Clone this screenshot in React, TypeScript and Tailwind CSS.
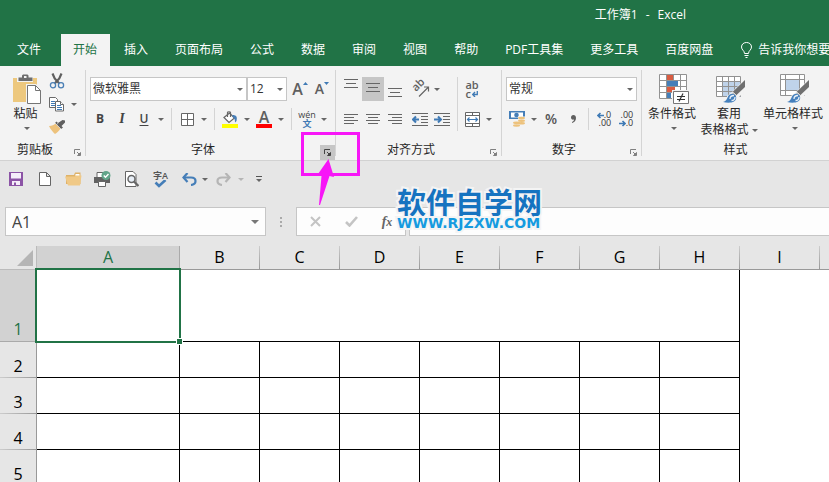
import React from "react";

type IconProps = { className?: string };

const Caret = ({ className = "fill-[#666]" }: IconProps) => (
  <svg width="6" height="3" viewBox="0 0 6 3" className={`shrink-0 ${className}`}>
    <path d="M0 0h6L3 3z" />
  </svg>
);

const CaretButton = ({ label }: { label: string }) => (
  <button aria-label={label} className="flex w-3 items-center justify-center">
    <Caret />
  </button>
);

const Tool = ({
  label,
  active,
  height = "h-6",
  children,
}: {
  label: string;
  active?: boolean;
  height?: string;
  children: React.ReactNode;
}) => (
  <button
    aria-label={label}
    title={label}
    className={`flex w-[22px] shrink-0 items-center justify-center ${height} ${
      active ? "bg-[#c6c6c6]" : ""
    }`}
  >
    {children}
  </button>
);

const Divider = () => <div className="mx-1 h-[22px] w-px shrink-0 bg-[#d4d4d4]" />;

const Group = ({
  name,
  className,
  launcher = true,
  launcherActive,
  children,
}: {
  name: string;
  className: string;
  launcher?: boolean;
  launcherActive?: boolean;
  children: React.ReactNode;
}) => (
  <>
    <section aria-label={name} className={`flex h-[90px] shrink-0 flex-col ${className}`}>
      {children}
      <div className="mt-auto flex items-end">
        <span className="flex-1 text-center leading-5 text-[#262626]">{name}</span>
        {launcher && (
          <button
            aria-label={`${name}设置`}
            className={`flex h-[15px] w-[15px] items-center justify-center ${
              launcherActive ? "bg-[#c6c6c6]" : ""
            }`}
          >
            <svg width="7" height="7" viewBox="0 0 7 7" fill="none" stroke={launcherActive ? "#444" : "#808080"}>
              <path d="M.5 5V.5H6M3 3l2.500 2.500" />
              <path d="M3.500 6.500h3v-3z" fill={launcherActive ? "#444" : "#808080"} />
            </svg>
          </button>
        )}
      </div>
    </section>
    {launcher && <div className="h-[86px] w-px shrink-0 bg-[#d4d4d4]" />}
  </>
);

const Combo = ({ label, value, className }: { label: string; value: string; className: string }) => (
  <div className={`relative ${className}`}>
    <select
      aria-label={label}
      className="h-6 w-full appearance-none border border-[#c6c6c6] bg-white pl-[2px] text-xs text-[#333]"
    >
      <option>{value}</option>
    </select>
    <Caret className="pointer-events-none absolute right-1 top-[11px] fill-[#666]" />
  </div>
);

/* three or four horizontal strokes, given as [x, width] per line */
const Lines = ({ rows, top }: { rows: number[][]; top: number }) => (
  <svg width="14" height="20" viewBox="0 0 14 20" fill="#666" shapeRendering="crispEdges">
    {rows.map(([x, w], i) => (
      <rect key={i} x={x} y={top + i * (rows.length === 4 ? 3 : 4)} width={w} height="1" />
    ))}
  </svg>
);

const PasteIcon = () => (
  <svg width="28" height="30" viewBox="0 0 28 30">
    <path d="M0 4h24v24H0z" fill="#edc87e" />
    <path d="M4 2.500h16V8H4z" fill="#f3f3f3" />
    <path d="M5.500 3.500h3.500V1.500L10 .5h4.500L15.500 1.500v2h4V7h-14z" fill="#6d6d6d" />
    <path d="M11 2h2.500v2H11z" fill="#f3f3f3" />
    <path d="M13 10h10l5 5v15H13z" fill="#f3f3f3" />
    <path d="M14.500 11.500h8l5 5v13h-13z" fill="#fff" stroke="#757575" />
    <path d="M22.500 11.500v5h5" fill="none" stroke="#757575" />
  </svg>
);

const CutIcon = () => (
  <svg width="16" height="16" viewBox="0 0 16 16" fill="none">
    <path d="M3.500.5l2.200 5 4.600 5M12.500.5l-2.200 5-4.600 5" stroke="#5f5f5f" strokeWidth="2.200" />
    <circle cx="4" cy="12.200" r="2.600" stroke="#4a7fb5" strokeWidth="1.300" />
    <circle cx="12" cy="12.200" r="2.600" stroke="#4a7fb5" strokeWidth="1.300" />
  </svg>
);

const CopyIcon = () => (
  <svg width="16" height="15" viewBox="0 0 16 15" fill="#fff" stroke="#6a6a6a">
    <path d="M.5.5h6l2 2v8h-8z" />
    <path d="M2 4.500h4M2 6.500h4M2 8.500h4" stroke="#3f7ab5" />
    <path d="M6.500 4.500h5l3 3v6.500h-8z" />
    <path d="M11.500 4.500v3h3" />
    <path d="M8 8.500h4M8 10.500h5M8 12.500h5" stroke="#3f7ab5" />
  </svg>
);

const BrushIcon = () => (
  <svg width="16" height="14" viewBox="0 0 16 14">
    <path d="M0 6c3 0 5-1 6.500-2.500l5 5C10 11 8 13 6 14 4 12 1.500 9.500 0 6z" fill="#edc27c" />
    <path d="M6 3l1.500-1.500L9 3l4.500-3L16 .5v2L12.500 6 14 7.500 12 9z" fill="#5f5f5f" />
    <path d="M9 3l-1 1.500M6 3l6 6" stroke="#f3f3f3" strokeWidth=".6" />
  </svg>
);

const PaintBrush = () => (
  <g>
    <path d="M29 6v7L20 21.500 16.500 18z" fill="#6f6f6f" />
    <path d="M17.500 18.500l3 3-1.500 1.500-3.500-3.500z" fill="#b9b9b9" stroke="#f3f3f3" strokeWidth=".7" />
    <path d="M7 28c3-.5 4-3 5-5.500 1.500-3 5-3.500 7-1.500s1.500 5-1 6.500C15.500 29 11 29 7 28z" fill="#4580bd" />
    <path d="M14 25c0-2 1.500-3.500 4-3.500M15.500 26.500c2 0 3.500-1.500 3.500-3.500" fill="none" stroke="#e7f0f8" strokeWidth="1.300" />
  </g>
);

const ConditionalIcon = () => (
  <svg width="30" height="30" viewBox="0 0 30 30">
    <path d="M.5.5h27v24H.5z" fill="#fff" />
    <path d="M.5.5h27v24H.5zM.5 6.500h27M.5 12.500h27M.5 18.500h27M7.500.5v24M14.500.5v24M21.500.5v24" fill="none" stroke="#929292" />
    <path d="M8 1h6v5H8zM8 13h8v5H8z" fill="#d95c41" />
    <path d="M8 7h11v5H8zM8 19h4v5H8z" fill="#457eb8" />
    <path d="M13 16h17v14H13z" fill="#f3f3f3" />
    <path d="M14.500 17.500h15v12h-15z" fill="#fff" stroke="#777" />
    <path d="M18 22.500h8M18 25.500h8M24 19.500l-4 8" stroke="#333" strokeWidth="1.200" />
  </svg>
);

const TableFormatIcon = () => (
  <svg width="30" height="30" viewBox="0 0 30 30">
    <path d="M.5 2.500h24v20H.5z" fill="#fff" />
    <path d="M7 8h18v15H7z" fill="#bfd3ea" />
    <path d="M.5 2.500h24v20H.5zM.5 7.500h24M.5 12.500h24M.5 17.500h24M6.500 2.500v20M12.500 2.500v20M18.500 2.500v20" fill="none" stroke="#929292" />
    <path d="M26 8L16 18 11 22v6l8-1 6-6h3z" fill="#f3f3f3" />
    <PaintBrush />
  </svg>
);

const CellStyleIcon = () => (
  <svg width="30" height="30" viewBox="0 0 30 30">
    <path d="M.5.5h24v21H.5z" fill="#fff" />
    <path d="M.5.5h24v21H.5zM.5 5.500h24M.5 16.500h24M5.500.5v21M19.500.5v21" fill="none" stroke="#929292" />
    <path d="M6 6h13v10H6z" fill="#bfd3ea" />
    <path d="M26 8L16 18 11 22v6l8-1 6-6h3z" fill="#f3f3f3" />
    <PaintBrush />
  </svg>
);

const BucketIcon = () => (
  <svg width="16" height="17" viewBox="0 0 16 17">
    <path d="M2 6.500L7.500 2l5 5-5.500 4.500z" fill="#fff" stroke="#666" strokeWidth="1.200" />
    <path d="M5.500 6V1.500C5.500.5 8.500.5 8.500 1.500V6" fill="none" stroke="#666" strokeWidth="1.200" />
    <path d="M10.500 4c4 0 5 2 4 6l-1.500 1.500c0-3-.5-4.500-2.500-5.500z" fill="#457eb8" />
    <path d="M0 13h16v4H0z" fill="#ff0" />
  </svg>
);

const IndentIcon = ({ right }: { right?: boolean }) => (
  <svg width="16" height="13" viewBox="0 0 16 13">
    <path d="M0 .5h16M9 3.500h7M9 6.500h7M9 9.500h7M0 12.500h16" stroke="#666" />
    <path d={right ? "M0 6.500h6M4 3.500l3 3-3 3" : "M7 6.500H1M4 3.500l-3 3 3 3"} stroke="#3f7ab5" strokeWidth="2" fill="none" />
  </svg>
);

const OrientationIcon = () => (
  <svg width="18" height="18" viewBox="0 0 18 18" className="overflow-visible">
    <text x="0" y="0" transform="translate(5 12) rotate(-45)" fontSize="11" fontWeight="600" fill="#5f5f5f">
      ab
    </text>
    <path d="M8 16.500L17 7.500M13 7h4.500v4.500" fill="none" stroke="#666" strokeWidth="1.200" />
  </svg>
);

const MergeIcon = () => (
  <svg width="15" height="15" viewBox="0 0 15 15">
    <path d="M.5.5h14v14H.5z" fill="#fff" stroke="#666" />
    <path d="M.5 3.500h14M.5 11.500h14M7.500.5v3M7.500 11.500v3" stroke="#666" />
    <path d="M2.500 7.500h10M4.500 5.500l-2 2 2 2M10.500 5.500l2 2-2 2" fill="none" stroke="#3f7ab5" strokeWidth="1.200" />
  </svg>
);

const CurrencyIcon = () => (
  <svg width="17" height="16" viewBox="0 0 17 16">
    <path d="M0 0h16v8H0z" fill="#457eb8" />
    <path d="M2 1.500h12v5H2z" fill="#fff" />
    <circle cx="7.500" cy="4" r="2.300" fill="#457eb8" />
    <path d="M9 5.500h8V15H4v-4.500h5z" fill="#f3f3f3" />
    <g fill="#edc27c">
      <ellipse cx="12.500" cy="7" rx="3.500" ry="1.200" />
      <ellipse cx="12.500" cy="9.700" rx="3.500" ry="1.200" />
      <ellipse cx="12.500" cy="12.300" rx="3.500" ry="1.200" />
      <ellipse cx="7.500" cy="11.800" rx="3.500" ry="1.200" />
      <ellipse cx="7.500" cy="14.500" rx="3.500" ry="1.200" />
    </g>
  </svg>
);

const SmallArrow = ({ right }: { right?: boolean }) => (
  <svg width="7" height="7" viewBox="0 0 7 7" fill="none" stroke="#3f7ab5" strokeWidth="1.600" className="shrink-0">
    <path d={right ? "M0 3.500h6M3.500 1L6 3.500 3.500 6" : "M7 3.500H1M3.500 1L1 3.500 3.500 6"} />
  </svg>
);

const quickTools = [
  {
    label: "保存",
    icon: (
      <svg width="14" height="14" viewBox="0 0 14 14">
        <path d="M0 0h14v14H0z" fill="#8c54a6" />
        <path d="M2 1h10v5.500H2zM3 9h8v4H3z" fill="#f6eefa" />
        <path d="M5 10.500h2V13H5z" fill="#8c54a6" />
      </svg>
    ),
  },
  {
    label: "新建",
    icon: (
      <svg width="12" height="14" viewBox="0 0 12 14" fill="#fff" stroke="#666">
        <path d="M.5.5h7l4 4v9H.5zM7.500.5v4h4" />
      </svg>
    ),
  },
  {
    label: "打开",
    icon: (
      <svg width="17" height="14" viewBox="0 0 17 14">
        <path d="M1 3h8l1-2.500h5.500V12H1z" fill="#dfb268" />
        <path d="M10.500 2h4v2h-4z" fill="#fff" />
        <path d="M0 4.500h10l1-1h5.500L15 13.500H3z" fill="#f0c987" />
      </svg>
    ),
  },
  {
    label: "快速打印",
    icon: (
      <svg width="17" height="16" viewBox="0 0 17 16">
        <path d="M3 1.500h7v5H3z" fill="#fff" stroke="#666" />
        <path d="M0 6h16v6H0z" fill="#626262" />
        <path d="M4.500 10.500h7v5h-7z" fill="#fff" stroke="#666" />
        <circle cx="12" cy="4.500" r="4.500" fill="#62a58a" />
        <path d="M9.800 4.500l1.700 1.800L14.500 3" fill="none" stroke="#fff" strokeWidth="1.400" />
      </svg>
    ),
  },
  {
    label: "打印预览",
    icon: (
      <svg width="14" height="16" viewBox="0 0 14 16">
        <path d="M.5.5h7.500l3 3v12H.5z" fill="#fff" stroke="#666" />
        <circle cx="6.500" cy="8" r="3.500" fill="#e7eef6" stroke="#666" strokeWidth="1.500" />
        <path d="M9 10.500l4.500 4.500" stroke="#666" strokeWidth="2.200" />
      </svg>
    ),
  },
  {
    label: "拼写检查",
    icon: (
      <span className="flex flex-col items-center">
        <span className="text-[9px] font-semibold leading-[9px] text-[#555]">字A</span>
        <svg width="13" height="8" viewBox="0 0 13 8" fill="none" stroke="#457eb8" strokeWidth="2.600">
          <path d="M1.500 2.500l3.500 3.500L11.500 0" />
        </svg>
      </span>
    ),
  },
];

const UndoIcon = ({ color, flip }: { color: string; flip?: boolean }) => (
  <svg width="15" height="13" viewBox="0 0 15 13" className={flip ? "-scale-x-100" : ""}>
    <path d="M1.500 4.500h7.500c6 0 6 7 0 7.500" fill="none" stroke={color} strokeWidth="2.200" />
    <path d="M5.500 0L1.500 4.500l4 4.500" fill="none" stroke={color} strokeWidth="2.200" />
  </svg>
);

const ribbonTabs = ["插入", "页面布局", "公式", "数据", "审阅", "视图", "帮助", "PDF工具集", "更多工具", "百度网盘"];
const columns = ["B", "C", "D", "E", "F", "G", "H", "I"];
const rows = [2, 3, 4, 5];

const Header = () => (
  <header className="bg-[#217346] text-white">
    <div className="flex h-[34px] items-center justify-end gap-2 pb-1 pr-[143px]">
      <span>工作簿1</span>
      <span>-</span>
      <span>Excel</span>
    </div>
    <nav className="flex h-8 items-stretch gap-px pl-1">
      <button className="mr-[6px] shrink-0 px-[13px]">文件</button>
      <button className="shrink-0 bg-[#f3f3f3] pl-3 pr-[13px] text-[#217346]">开始</button>
      {ribbonTabs.map((tab) => (
        <button key={tab} className="shrink-0 px-[13px]">
          {tab}
        </button>
      ))}
      <button className="flex shrink-0 items-center gap-[6px] pl-[14px]">
        <svg width="11" height="16" viewBox="0 0 11 16" fill="none" stroke="#fff">
          <path d="M3.500 11.500c0-3-3-3.500-3-6.500 0-6 10-6 10 0 0 3-3 3.500-3 6.500zM3.500 13.500h4M4.500 15.500h2" />
        </svg>
        告诉我你想要
      </button>
    </nav>
  </header>
);

const StyleButton = ({ label, icon, className }: { label: string; icon: React.ReactNode; className: string }) => (
  <button className={`flex shrink-0 flex-col items-center leading-4 ${className}`}>
    <span className="h-8 pl-[3px]">{icon}</span>
    <span>{label}</span>
    <span className="flex h-3 items-center pl-[3px]">
      <Caret />
    </span>
  </button>
);

const Ribbon = () => (
  <div className="flex border-b border-[#d2d2d2] bg-[#f3f3f3] pt-1 text-[#262626]">
    <Group name="剪贴板" className="w-[85px]">
      <div className="flex pl-[10px]">
        <StyleButton label="粘贴" icon={<PasteIcon />} className="mt-1 w-[31px]" />
        <div className="ml-[5px] flex flex-col">
          <Tool label="剪切" height="h-[22px]"><CutIcon /></Tool>
          <div className="flex">
            <Tool label="复制"><CopyIcon /></Tool>
            <CaretButton label="复制选项" />
          </div>
          <Tool label="格式刷" height="h-[22px]"><BrushIcon /></Tool>
        </div>
      </div>
    </Group>

    <Group name="字体" className="w-[249px]" launcherActive>
      <div className="mt-[7px] flex pl-1">
        <Combo label="字体名称" value="微软雅黑" className="w-[157px]" />
        <Combo label="字号" value="12" className="mr-[2px] w-10" />
        <Tool label="增大字号">
          <span className="text-base font-semibold text-[#5f5f5f]">A</span>
          <svg width="5" height="14" viewBox="0 0 5 14"><path d="M0 3h5L2.500 0z" fill="#3f7ab5" /></svg>
        </Tool>
        <Tool label="减小字号">
          <span className="text-sm font-semibold text-[#5f5f5f]">A</span>
          <svg width="5" height="14" viewBox="0 0 5 14"><path d="M0 0h5L2.500 3z" fill="#3f7ab5" /></svg>
        </Tool>
      </div>
      <div className="mt-[6px] flex items-center pl-[3px] text-[#444]">
        <Tool label="加粗"><b>B</b></Tool>
        <Tool label="倾斜"><i className="font-['Liberation_Serif',serif] text-sm font-bold">I</i></Tool>
        <Tool label="下划线"><u className="font-semibold underline-offset-2">U</u></Tool>
        <CaretButton label="下划线选项" />
        <Divider />
        <Tool label="边框">
          <svg width="13" height="13" viewBox="0 0 13 13" fill="#fff" stroke="#666">
            <path d="M.5.5h12v12H.5zM6.500.5v12M.5 6.500h12" />
          </svg>
        </Tool>
        <CaretButton label="边框选项" />
        <Divider />
        <Tool label="填充颜色"><BucketIcon /></Tool>
        <CaretButton label="填充颜色选项" />
        <Tool label="字体颜色">
          <span className="flex w-4 justify-center border-b-4 border-[#f00] text-base font-semibold leading-[13px] text-[#5f5f5f]">A</span>
        </Tool>
        <CaretButton label="字体颜色选项" />
        <Divider />
        <Tool label="拼音">
          <span className="flex flex-col items-center text-[9px] leading-[9px]">
            <span>wén</span>
            <span className="font-bold text-[#3f7ab5]">文</span>
          </span>
        </Tool>
        <CaretButton label="拼音选项" />
      </div>
    </Group>

    <Group name="对齐方式" className="w-[165px]">
      <div className="mt-[7px] flex pl-1">
        <div className="flex w-[114px] flex-col gap-[6px]">
          <div className="flex">
            <Tool label="顶端对齐"><Lines rows={[[0, 14], [2, 10], [0, 14]]} top={0} /></Tool>
            <Tool label="垂直居中" active><Lines rows={[[0, 14], [2, 10], [0, 14]]} top={4} /></Tool>
            <Tool label="底端对齐"><Lines rows={[[0, 14], [2, 10], [0, 14]]} top={9} /></Tool>
            <span className="w-[3px]" />
            <Tool label="方向"><OrientationIcon /></Tool>
            <CaretButton label="方向选项" />
          </div>
          <div className="flex">
            <Tool label="左对齐"><Lines rows={[[0, 14], [0, 10], [0, 14], [0, 10]]} top={5} /></Tool>
            <Tool label="居中"><Lines rows={[[0, 14], [2, 10], [0, 14], [2, 10]]} top={5} /></Tool>
            <Tool label="右对齐"><Lines rows={[[0, 14], [4, 10], [0, 14], [4, 10]]} top={5} /></Tool>
            <span className="w-[3px]" />
            <Tool label="减少缩进量"><IndentIcon /></Tool>
            <Tool label="增加缩进量"><IndentIcon right /></Tool>
          </div>
        </div>
        <div className="mx-[3px] w-px bg-[#d4d4d4]" />
        <div className="flex flex-col gap-[6px]">
          <Tool label="自动换行">
            <span className="flex flex-col text-[11px] font-semibold leading-[9px] text-[#5f5f5f]">
              <span>ab</span>
              <span className="flex items-center gap-px">
                c
                <svg width="6" height="6" viewBox="0 0 6 6" fill="none" stroke="#3f7ab5" strokeWidth="1.300">
                  <path d="M5.300 0v3.500H1M3 1L.7 3.500 3 6" />
                </svg>
              </span>
            </span>
          </Tool>
          <div className="flex">
            <Tool label="合并后居中"><MergeIcon /></Tool>
            <CaretButton label="合并选项" />
          </div>
        </div>
      </div>
    </Group>

    <Group name="数字" className="w-[139px]">
      <div className="mt-[7px] pl-1">
        <Combo label="数字格式" value="常规" className="w-[131px]" />
      </div>
      <div className="mt-[6px] flex items-center pl-1 text-[#555]">
        <Tool label="会计数字格式"><CurrencyIcon /></Tool>
        <CaretButton label="会计格式选项" />
        <Tool label="百分比样式"><span className="text-sm font-semibold">%</span></Tool>
        <Tool label="千位分隔样式">
          <svg width="5" height="8" viewBox="0 0 5 8" fill="#5f5f5f">
            <path d="M2.300 0C4 0 5 1 5 3c0 2.500-1.500 4.500-4 5V7c1.300-.5 2-1.300 2-2.500C1 5 0 4 0 2.500 0 1 1 0 2.300 0z" />
          </svg>
        </Tool>
        <Divider />
        <Tool label="增加小数位数">
          <span className="flex flex-col items-end text-[9px] leading-2 text-[#333]">
            <span className="flex items-center"><SmallArrow />.0</span>
            <span>.00</span>
          </span>
        </Tool>
        <Tool label="减少小数位数">
          <span className="flex flex-col items-end text-[9px] leading-2 text-[#333]">
            <span>.00</span>
            <span className="flex items-center"><SmallArrow right />.0</span>
          </span>
        </Tool>
      </div>
    </Group>

    <Group name="样式" className="w-[187px]" launcher={false}>
      <div className="mt-1 flex pl-[5px]">
        <StyleButton label="条件格式" icon={<ConditionalIcon />} className="w-[50px]" />
        <button className="ml-px flex w-[62px] shrink-0 flex-col items-center leading-4">
          <span className="h-8 pl-[3px]"><TableFormatIcon /></span>
          <span>套用</span>
          <span className="flex items-center gap-[3px]">
            表格格式
            <Caret />
          </span>
        </button>
        <StyleButton label="单元格样式" icon={<CellStyleIcon />} className="ml-[2px] w-[62px]" />
      </div>
    </Group>
  </div>
);

const QuickAccess = () => (
  <div className="flex h-9 items-center pl-px">
    {quickTools.map(({ label, icon }) => (
      <button key={label} aria-label={label} className="flex w-[29px] justify-center">
        {icon}
      </button>
    ))}
    <button aria-label="撤消" className="flex w-6 justify-end pr-[2px]"><UndoIcon color="#457eb8" /></button>
    <CaretButton label="撤消选项" />
    <button aria-label="恢复" className="flex w-6 justify-center" disabled><UndoIcon color="#b5b5b5" flip /></button>
    <button aria-label="恢复选项" className="flex w-3 justify-center" disabled><Caret className="fill-[#b5b5b5]" /></button>
    <button aria-label="自定义快速访问工具栏" className="flex w-6 flex-col items-center gap-[2px]">
      <span className="h-px w-[6px] bg-[#555]" />
      <Caret />
    </button>
  </div>
);

const FormulaBar = () => (
  <div className="mt-[10px] flex h-[29px] items-stretch pl-[5px]">
    <div className="flex w-[261px] shrink-0 items-center border border-[#c6c6c6] bg-[#fdfdfd] pl-[6px] pr-1">
      <input aria-label="名称框" defaultValue="A1" className="min-w-0 flex-1 bg-transparent text-base text-[#444] outline-none" />
      <button aria-label="名称列表" className="flex w-3 justify-center">
        <svg width="8" height="4" viewBox="0 0 8 4" fill="#777"><path d="M0 0h8L4 4z" /></svg>
      </button>
    </div>
    <div className="flex w-[30px] shrink-0 flex-col items-center justify-center gap-[2px]">
      <span className="size-[2px] bg-[#aaa]" />
      <span className="size-[2px] bg-[#aaa]" />
      <span className="size-[2px] bg-[#aaa]" />
    </div>
    <div className="mr-[3px] flex w-[110px] shrink-0 items-center border border-[#c6c6c6] bg-[#fdfdfd]">
      <button aria-label="取消" className="flex w-9 justify-center">
        <svg width="11" height="11" viewBox="0 0 11 11" stroke="#c4c4c4" strokeWidth="2"><path d="M1 1l9 9M10 1l-9 9" /></svg>
      </button>
      <button aria-label="输入" className="flex w-9 justify-center">
        <svg width="13" height="11" viewBox="0 0 13 11" fill="none" stroke="#c4c4c4" strokeWidth="2.600"><path d="M1 6l3.500 3.500L12 1" /></svg>
      </button>
      <button aria-label="插入函数" className="w-9 font-['Liberation_Serif',serif] text-sm font-bold italic leading-5 text-[#666]">
        f<span className="text-xs">x</span>
      </button>
    </div>
    <input aria-label="编辑栏" className="min-w-0 flex-1 border border-r-0 border-[#c6c6c6] bg-[#fdfdfd] px-2 outline-none" />
  </div>
);

const Sheet = () => (
  <div className="mt-[10px] min-h-0 flex-1 overflow-hidden bg-white">
    <table className="w-full table-fixed border-separate border-spacing-0 text-base text-black">
      <colgroup>
        <col className="w-[37px]" />
        <col className="w-[143px]" />
        {columns.map((c) => (
          <col key={c} className="w-20" />
        ))}
        <col />
      </colgroup>
      <thead>
        <tr className="h-6 bg-[#e6e6e6] leading-5">
          <th className="border-b border-r border-[#bbb] p-0" aria-label="全选">
            <svg width="16" height="16" viewBox="0 0 16 16" className="ml-auto mr-[3px]"><path d="M16 0v16H0z" fill="#b5b5b5" /></svg>
          </th>
          <th className="border-b border-r border-[#aaa] bg-[#d2d2d2] p-0 pb-px font-normal text-[#217346]">A</th>
          {columns.map((c) => (
            <th
              key={c}
              className="border-b border-[#999] bg-[linear-gradient(#ccc,#999)] bg-[length:1px_100%] bg-right bg-no-repeat p-0 pb-px pr-px font-normal"
            >
              {c}
            </th>
          ))}
          <th className="border-b border-[#999] p-0" />
        </tr>
      </thead>
      <tbody>
        <tr className="h-[72px]">
          <th className="border-b border-r border-[#aaa] bg-[#d2d2d2] p-0 align-bottom font-normal leading-6 text-[#217346]">1</th>
          <td className="relative border-b border-black p-0">
            <div className="absolute -left-[2px] -right-[1px] -top-[2px] -bottom-[2px] border-2 border-[#217346]" />
            <div className="absolute -bottom-[4px] -right-[3px] size-[7px] border border-white bg-[#217346]" />
          </td>
          <td colSpan={7} className="border-b border-r border-black p-0" />
          <td />
          <td />
        </tr>
        {rows.map((row) => (
          <tr key={row} className="h-9">
            <th className="border-r border-[#999] bg-[#e6e6e6] bg-[linear-gradient(to_right,#ccc,#999)] bg-[length:100%_1px] bg-bottom bg-no-repeat p-0 align-bottom font-normal leading-6">
              {row}
            </th>
            <td className="border-b border-r border-black p-0" />
            {columns.slice(0, 7).map((c) => (
              <td key={c} className="border-b border-r border-black p-0" />
            ))}
            <td />
            <td />
          </tr>
        ))}
      </tbody>
    </table>
  </div>
);

const Callout = () => (
  <div className="pointer-events-none absolute left-[301px] top-[132px] h-11 w-[59px] border-3 border-[#f716f7]">
    <svg width="20" height="48" viewBox="0 0 20 48" className="absolute left-[14px] top-6">
      <path d="M10.500 0L16 18l-4.500-1L2 46H1L3.500 17 0 15z" fill="#f716f7" />
    </svg>
  </div>
);

const Watermark = () => (
  <div className="pointer-events-none absolute left-[397px] top-[187px] whitespace-nowrap font-bold [-webkit-text-stroke:4px_#f4f4f4] [paint-order:stroke_fill]">
    <div className="text-[29px] leading-8 text-[#1673c0]">软件自学网</div>
    <div className="font-['DejaVu_Sans',sans-serif] text-sm leading-2 text-[#159be0]">WWW.RJZXW.COM</div>
  </div>
);

const App = () => {
  return (
    <div className="relative flex h-screen flex-col overflow-hidden whitespace-nowrap bg-[#e6e6e6] font-['Open_Sans','Noto_Sans_CJK_SC',sans-serif] text-xs">
      <Header />
      <Ribbon />
      <QuickAccess />
      <FormulaBar />
      <Sheet />
      <Callout />
      <Watermark />
    </div>
  );
};

export default App;
